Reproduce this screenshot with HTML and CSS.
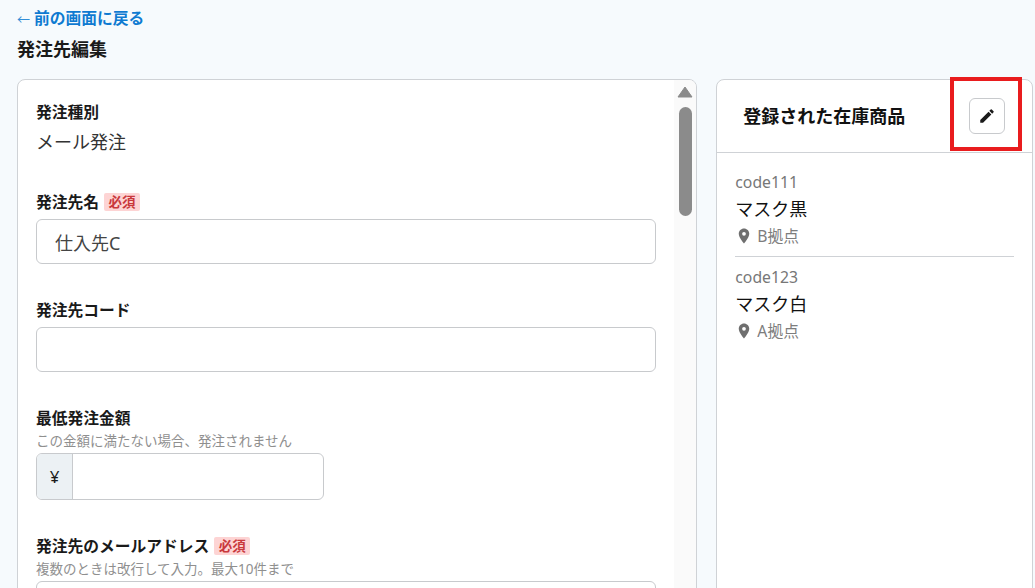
FILE: index.html
```html
<!DOCTYPE html>
<html lang="ja">
<head>
<meta charset="utf-8">
<title>発注先編集</title>
<link rel="stylesheet" href="styles.css">
</head>
<body>
<div class="page">
  <a class="back" href="#"><span class="arrow">←</span> 前の画面に戻る</a>
  <h1 class="title">発注先編集</h1>
  <div class="columns">
    <section class="card form-card">
      <div class="form">
        <div class="field field-type">
          <div class="label">発注種別</div>
          <div class="value">メール発注</div>
        </div>
        <div class="field">
          <div class="label">発注先名<span class="req">必須</span></div>
          <div class="input">仕入先C</div>
        </div>
        <div class="field">
          <div class="label">発注先コード</div>
          <div class="input"></div>
        </div>
        <div class="field">
          <div class="label">最低発注金額</div>
          <div class="hint">この金額に満たない場合、発注されません</div>
          <div class="money"><span class="yen">¥</span><span class="money-box"></span></div>
        </div>
        <div class="field">
          <div class="label">発注先のメールアドレス<span class="req">必須</span></div>
          <div class="hint">複数のときは改行して入力。最大10件まで</div>
          <div class="input tall"></div>
        </div>
      </div>
      <div class="scrollbar">
        <svg class="scroll-up" width="16" height="12" viewBox="0 0 16 12"><path d="M8 1 15 11H1Z" fill="#8b8b8b" stroke="#8b8b8b" stroke-linejoin="round"/></svg>
        <div class="thumb"></div>
      </div>
    </section>
    <aside class="card side-card">
      <header class="side-head">
        <h2 class="side-title">登録された在庫商品</h2>
        <button class="edit" type="button" aria-label="編集">
          <svg width="18" height="18" viewBox="0 0 24 24"><path d="M3 17.25V21h3.75L17.81 9.94l-3.75-3.75L3 17.25zM20.71 7.04a1 1 0 0 0 0-1.41l-2.34-2.34a1 1 0 0 0-1.41 0l-1.83 1.83 3.75 3.75 1.83-1.83z" fill="#1a1a1a"/></svg>
        </button>
        <div class="highlight"></div>
      </header>
      <ul class="items">
        <li class="item">
          <div class="code">code111</div>
          <div class="name">マスク黒</div>
          <div class="place"><svg width="18" height="18" viewBox="0 0 24 24"><path d="M12 2C8.13 2 5 5.13 5 9c0 5.25 7 13 7 13s7-7.75 7-13c0-3.87-3.13-7-7-7zm0 9.5a2.5 2.5 0 1 1 0-5 2.5 2.5 0 0 1 0 5z" fill="#6f6f6f"/></svg>B拠点</div>
        </li>
        <li class="item">
          <div class="code">code123</div>
          <div class="name">マスク白</div>
          <div class="place"><svg width="18" height="18" viewBox="0 0 24 24"><path d="M12 2C8.13 2 5 5.13 5 9c0 5.25 7 13 7 13s7-7.75 7-13c0-3.87-3.13-7-7-7zm0 9.5a2.5 2.5 0 1 1 0-5 2.5 2.5 0 0 1 0 5z" fill="#6f6f6f"/></svg>A拠点</div>
        </li>
      </ul>
    </aside>
  </div>
</div>
</body>
</html>
```
FILE: styles.css
```css
* { box-sizing: border-box; }
html, body { margin: 0; height: 100%; overflow: hidden; }
body {
  background: #f6fafd;
  color: #1a1a1a;
  font-family: "Noto Sans", "Noto Sans CJK JP", sans-serif;
  font-size: 18px;
}
.page { height: 588px; overflow: hidden; padding: 8px 2px 0 17px; }
.back {
  display: block;
  height: 20px;
  line-height: 20px;
  color: #0f7ad1;
  font-size: 15.75px;
  font-weight: 700;
  text-decoration: none;
}
.arrow { font-size: 13px; font-weight: 400; opacity: 0.85; }
.title {
  margin: 10px 0 0;
  height: 22px;
  line-height: 22px;
  font-size: 18px;
  font-weight: 700;
}
.columns { display: flex; gap: 19px; margin-top: 19px; }
.card {
  background: #fff;
  border: 1px solid #cfd2d6;
  border-radius: 8px;
  height: 560px;
}
.form-card { width: 681px; display: flex; overflow: hidden; }
.form { width: 656px; padding: 22px 0 0 18px; flex: none; }
.scrollbar {
  flex: 1;
  background: #fafafa;
  display: flex;
  flex-direction: column;
  align-items: center;
  padding-top: 6px;
}
.scroll-up { display: block; }
.thumb { width: 13px; height: 109px; margin-top: 9px; background: #8b8b8b; border-radius: 7px; }
.field { margin-bottom: 36px; }
.field-type { margin-bottom: 38px; }
.label {
  height: 20px;
  line-height: 20px;
  font-size: 15.75px;
  font-weight: 700;
  display: flex;
  align-items: center;
}
.value { margin-top: 8px; height: 24px; line-height: 24px; font-size: 18px; color: #333; }
.req {
  margin-left: 5px;
  padding: 0 4.5px;
  height: 18px;
  line-height: 18px;
  background: #fdd4d4;
  color: #c9383c;
  border-radius: 2px;
  font-size: 13.5px;
}
.input {
  margin-top: 7px;
  width: 620px;
  height: 45px;
  line-height: 47px;
  padding-left: 18px;
  background: #fff;
  border: 1px solid #c8cacd;
  border-radius: 6px;
  font-size: 18px;
  color: #444;
}
.tall { height: 80px; margin-top: 3px; }
.hint { margin-top: 5px; height: 17px; line-height: 17px; font-size: 13.5px; color: #8f8f8f; }
.money {
  display: flex;
  margin-top: 3px;
  width: 288px;
  height: 47px;
  border: 1px solid #c8cacd;
  border-radius: 6px;
  overflow: hidden;
}
.yen {
  width: 36px;
  background: #ecf1f4;
  border-right: 1px solid #c8cacd;
  text-align: center;
  line-height: 45px;
  font-size: 17px;
}
.money-box { flex: 1; }
.side-card { width: 317px; }
.side-head {
  position: relative;
  height: 73px;
  border-bottom: 1px solid #cfd2d6;
  display: flex;
  align-items: center;
  justify-content: space-between;
  padding: 0 27px 0 26px;
}
.side-title { margin: 0 0 2px; font-size: 18px; font-weight: 700; color: #111; }
.highlight {
  position: absolute;
  top: -3px;
  right: 10px;
  width: 72px;
  height: 74px;
  border: 4px solid #e91c1e;
  pointer-events: none;
}
.edit {
  width: 36px;
  height: 36px;
  padding: 0;
  background: #fff;
  border: 1px solid #c8cacd;
  border-radius: 6px;
  display: flex;
  align-items: center;
  justify-content: center;
}
.items { list-style: none; margin: 0; padding: 9px 18px 0; }
.item { padding: 10px 0; border-bottom: 1px solid #cfd2d6; }
.item:last-child { border-bottom: 0; }
.code { height: 20px; line-height: 20px; font-size: 15.75px; color: #777; }
.name { margin-top: 4px; height: 26px; line-height: 26px; font-size: 18px; color: #111; }
.place {
  margin-top: 4px;
  height: 20px;
  line-height: 20px;
  display: flex;
  align-items: center;
  gap: 4px;
  font-size: 15.75px;
  color: #7d7d7d;
}
```
